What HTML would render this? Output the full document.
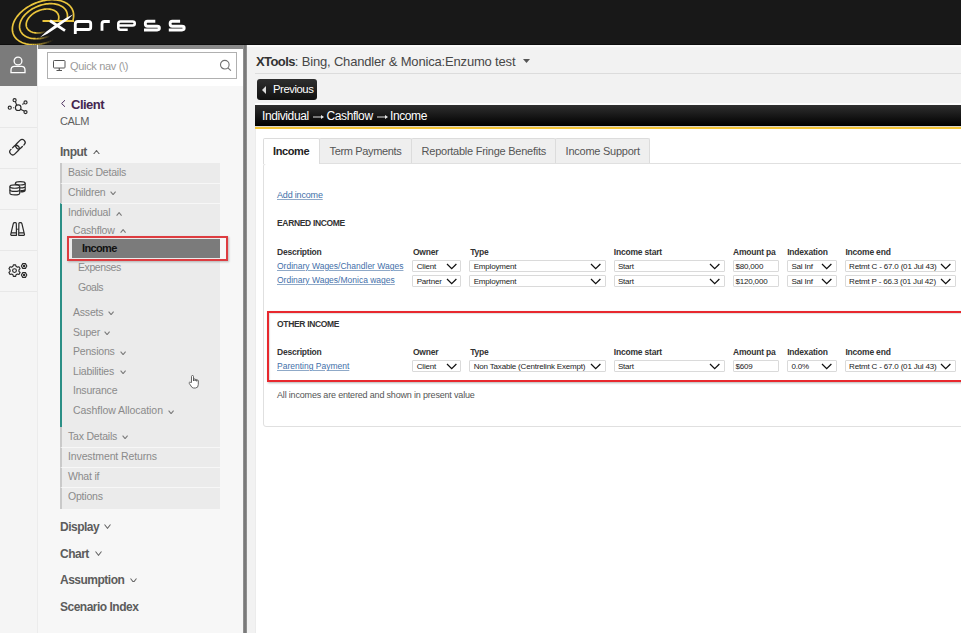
<!DOCTYPE html>
<html><head><meta charset="utf-8">
<style>
*{box-sizing:border-box}
html,body{margin:0;padding:0}
body{width:961px;height:633px;overflow:hidden;position:relative;background:#f2f2f2;font-family:"Liberation Sans",sans-serif;color:#444}
.abs{position:absolute}
.t{position:absolute;white-space:nowrap;line-height:1}
#hdr{left:0;top:0;width:961px;height:45px;background:#181818;border-bottom:1px solid #0e0e0e}
#icons{left:0;top:45px;width:38px;height:588px;background:#f5f5f5;border-right:1px solid #ececec}
.ic{position:absolute;left:0;width:37px;height:41px;border-bottom:1px solid #e6e6e6}
#side{left:38px;top:45px;width:205px;height:588px;background:#f7f7f7}
#sbar{left:243px;top:45px;width:4px;height:588px;background:linear-gradient(to right,#9a9a9a,#787878 40%,#787878 60%,#9a9a9a)}
#main{left:247px;top:45px;width:714px;height:588px;background:#f2f2f2}
.sub{position:absolute;left:60px;width:160px;background:#ebebeb;border-left:2.5px solid #c9c9c9}
.si{color:#8a8a8a;font-size:10.5px;letter-spacing:-0.2px}
.hd{color:#5c5c5c;font-size:12px;font-weight:bold;letter-spacing:-0.5px}
.chev{display:inline-block;vertical-align:middle}
.tab{position:absolute;top:138px;height:25px;border:1px solid #dcdcdc;border-bottom:none;background:#efefef;border-radius:2px 2px 0 0}
.lnk{color:#3f6fa9;text-decoration:underline;text-decoration-color:#8fa9c8}
.th{font-weight:bold;color:#333;letter-spacing:-0.2px}
.sel{position:absolute;height:12px;border:1px solid #d9d9d9;background:#fff;border-radius:1px}
.sel span{position:absolute;left:4px;top:2px;font-size:8px;line-height:8px;color:#222;white-space:nowrap}
.sel svg{position:absolute;top:3px}
</style></head><body>
<!-- header -->
<div id="hdr" class="abs">
<svg class="abs" style="left:0;top:0" width="200" height="45" viewBox="0 0 200 45">
 <g fill="none" stroke="#e9c43c" stroke-width="1.7"><path d="M72.66 20.97 L73.05 19.68 L73.35 18.40 L73.55 17.13 L73.64 15.88 L73.63 14.65 L73.52 13.44 L73.31 12.26 L73.00 11.12 L72.59 10.01 L72.08 8.94 L71.47 7.92 L70.77 6.95 L69.98 6.02 L69.10 5.15 L68.13 4.33 L67.07 3.58 L65.94 2.89 L64.73 2.26 L63.45 1.69 L62.11 1.20 L60.69 0.77 L59.22 0.42 L57.70 0.14 L56.13 -0.07 L54.51 -0.21 L52.85 -0.27 L51.17 -0.25 L49.45 -0.17 L47.72 -0.00 L45.96 0.23 L44.20 0.54 L42.44 0.92 L40.67 1.38 L38.92 1.90 L37.18 2.49 L35.45 3.14 L33.75 3.86 L32.09 4.63 L30.46 5.47 L28.87 6.36 L27.32 7.31 L25.83 8.30 L24.40 9.34 L23.03 10.42 L21.72 11.54 L20.49 12.70 L19.33 13.89 L18.25 15.11 L17.25 16.35 L16.33 17.61 L15.51 18.88 L14.77 20.16 L14.13 21.46 L13.59 22.75 L13.14 24.04 L12.79 25.33 L12.54 26.61 L12.40 27.87 L12.35 29.11 L12.41 30.33 L12.57 31.52 L12.83 32.69 L13.19 33.81 L13.64 34.90 L14.20 35.95 L14.85 36.95 L15.60 37.90 L16.43 38.80 L17.35 39.65 L18.36 40.43 L19.45 41.16 L20.62 41.82 L21.87 42.42 L23.18 42.95 L24.56 43.41 L26.00 43.80 L27.49 44.12 L29.04 44.37 L30.64 44.55 L32.27 44.65"/><path d="M32.27 44.65 L34.30 44.67" stroke-opacity="0.95"/><path d="M34.30 44.67 L36.37 44.58" stroke-opacity="0.85"/><path d="M36.37 44.58 L38.48 44.38" stroke-opacity="0.75"/><path d="M38.48 44.38 L40.60 44.07" stroke-opacity="0.65"/><path d="M40.60 44.07 L42.74 43.66" stroke-opacity="0.55"/><path d="M42.74 43.66 L44.88 43.15" stroke-opacity="0.45"/><path d="M44.88 43.15 L47.01 42.53" stroke-opacity="0.35"/><path d="M47.01 42.53 L49.12 41.81" stroke-opacity="0.25"/><path d="M49.12 41.81 L51.20 41.00" stroke-opacity="0.15"/><path d="M51.20 41.00 L53.24 40.09" stroke-opacity="0.05"/><path d="M66.40 20.97 L66.76 19.95 L67.05 18.93 L67.26 17.93 L67.39 16.93 L67.44 15.95 L67.41 14.98 L67.30 14.04 L67.10 13.12 L66.83 12.23 L66.48 11.37 L66.05 10.54 L65.54 9.75 L64.96 9.00 L64.31 8.29 L63.59 7.62 L62.80 7.00 L61.94 6.42 L61.02 5.90 L60.04 5.42 L59.01 5.00 L57.92 4.64 L56.79 4.33 L55.61 4.08 L54.39 3.89 L53.13 3.75 L51.84 3.67 L50.52 3.66 L49.18 3.70 L47.82 3.80 L46.44 3.96 L45.06 4.18 L43.67 4.46 L42.28 4.79 L40.89 5.18 L39.51 5.62 L38.15 6.11 L36.80 6.66 L35.47 7.25 L34.18 7.90 L32.91 8.58 L31.68 9.31 L30.49 10.08 L29.35 10.89 L28.25 11.73 L27.20 12.61 L26.21 13.51 L25.28 14.44 L24.40 15.39 L23.60 16.36 L22.86 17.35 L22.19 18.35 L21.59 19.36 L21.07 20.38 L20.62 21.40 L20.25 22.42 L19.96 23.43 L19.74 24.44 L19.61 25.44 L19.56 26.42 L19.59 27.38 L19.70 28.33 L19.89 29.25 L20.16 30.14 L20.51 31.00 L20.94 31.83 L21.44 32.62 L22.02 33.38 L22.67 34.09 L23.39 34.76 L24.18 35.38 L25.03 35.96 L25.95 36.49 L26.92 36.96 L27.95 37.38 L29.04 37.75 L30.17 38.06 L31.35 38.31 L32.57 38.51 L33.83 38.65 L35.11 38.72"/><path d="M35.11 38.72 L36.58 38.74" stroke-opacity="0.95"/><path d="M36.58 38.74 L38.07 38.69" stroke-opacity="0.85"/><path d="M38.07 38.69 L39.59 38.56" stroke-opacity="0.75"/><path d="M39.59 38.56 L41.12 38.36" stroke-opacity="0.65"/><path d="M41.12 38.36 L42.66 38.08" stroke-opacity="0.55"/><path d="M42.66 38.08 L44.21 37.74" stroke-opacity="0.45"/><path d="M44.21 37.74 L45.75 37.33" stroke-opacity="0.35"/><path d="M45.75 37.33 L47.29 36.85" stroke-opacity="0.25"/><path d="M47.29 36.85 L48.80 36.31" stroke-opacity="0.15"/><path d="M48.80 36.31 L50.30 35.70" stroke-opacity="0.05"/><path d="M58.07 20.96 L58.32 20.26 L58.52 19.57 L58.67 18.87 L58.76 18.19 L58.79 17.51 L58.77 16.85 L58.70 16.20 L58.57 15.57 L58.38 14.95 L58.14 14.36 L57.85 13.79 L57.51 13.24 L57.12 12.72 L56.67 12.22 L56.18 11.76 L55.65 11.33 L55.06 10.93 L54.44 10.56 L53.77 10.24 L53.07 9.94 L52.33 9.69 L51.56 9.47 L50.76 9.29 L49.92 9.15 L49.07 9.05 L48.19 8.99 L47.29 8.98 L46.38 9.00 L45.45 9.06 L44.51 9.17 L43.57 9.31 L42.62 9.50 L41.67 9.72 L40.73 9.98 L39.79 10.28 L38.86 10.61 L37.94 10.98 L37.04 11.39 L36.16 11.82 L35.29 12.29 L34.46 12.79 L33.65 13.31 L32.87 13.86 L32.12 14.44 L31.40 15.03 L30.73 15.65 L30.09 16.29 L29.50 16.94 L28.95 17.60 L28.45 18.28 L27.99 18.97 L27.59 19.66 L27.23 20.36 L26.92 21.06 L26.67 21.76 L26.48 22.45 L26.33 23.14 L26.24 23.83 L26.21 24.50 L26.23 25.17 L26.31 25.82 L26.44 26.45 L26.62 27.06 L26.86 27.66 L27.15 28.23 L27.50 28.78 L27.89 29.30 L28.34 29.79 L28.83 30.25 L29.37 30.68 L29.95 31.08 L30.58 31.44 L31.25 31.77 L31.95 32.07 L32.69 32.32 L33.46 32.54 L34.27 32.71 L35.10 32.85 L35.96 32.95 L36.83 33.01"/><path d="M36.83 33.01 L37.72 33.02" stroke-opacity="0.95"/><path d="M37.72 33.02 L38.63 33.00" stroke-opacity="0.85"/><path d="M38.63 33.00 L39.55 32.94" stroke-opacity="0.75"/><path d="M39.55 32.94 L40.47 32.83" stroke-opacity="0.65"/><path d="M40.47 32.83 L41.41 32.69" stroke-opacity="0.55"/><path d="M41.41 32.69 L42.34 32.51" stroke-opacity="0.45"/><path d="M42.34 32.51 L43.28 32.29" stroke-opacity="0.35"/><path d="M43.28 32.29 L44.22 32.04" stroke-opacity="0.25"/><path d="M44.22 32.04 L45.15 31.74" stroke-opacity="0.15"/><path d="M45.15 31.74 L46.07 31.42" stroke-opacity="0.05"/><path d="M42.5 21 L74 21" stroke-width="2"/></g>
 <path d="M40.2 37.3 L47.47 33.69 L57.65 27.12 L67.37 19.89 L73.3 14.3 L66.03 17.91 L55.85 24.48 L46.13 31.71 Z" fill="#fff"/>
 <g fill="none" stroke="#fff" stroke-width="2.85">
  <path d="M50 20.8 L65 30.6"/>
  <path d="M75.3 34 L75.3 24 Q75.3 21.5 78 21.5 L88.4 21.5 Q90.7 21.5 90.7 23.8 L90.7 27.2 Q90.7 29.5 88.4 29.5 L75.3 29.5"/>
  <path d="M102 30.8 L102 24 Q102 21.5 104.5 21.5 L109.8 21.5"/>
  <path stroke-width="2.55" d="M127.7 29.65 L120.5 29.65 Q118.3 29.65 118.3 27.4 L118.3 23.7 Q118.3 21.45 120.5 21.45 L132.6 21.45 Q134.75 21.45 134.75 23.5 Q134.75 25.55 132.6 25.55 L118.3 25.55"/>
  <path d="M155.3 21.2 L147.5 21.2 Q145.3 21.2 145.3 23.7 Q145.3 26.2 147.5 26.2 L157.2 26.2 Q159.4 26.2 159.4 28.1 Q159.4 30 157.2 30 L144 30"/>
  <path d="M180.1 21.2 L172.3 21.2 Q170.1 21.2 170.1 23.7 Q170.1 26.2 172.3 26.2 L182 26.2 Q184.2 26.2 184.2 28.1 Q184.2 30 182 30 L168.8 30"/>
 </g>
</svg>
</div>

<!-- icon column -->
<div id="icons" class="abs">
 <div class="abs" style="left:0;top:0;width:37px;height:41px;background:#7b7b7b"></div>
 <svg class="abs" style="left:8px;top:10px" width="20" height="20" viewBox="0 0 20 20" fill="none" stroke="#fff" stroke-width="1.3">
  <circle cx="10" cy="6" r="3.9"/>
  <path d="M3 17.6 L3 15 Q3 11.4 6.6 11.4 L13.4 11.4 Q17 11.4 17 15 L17 17.6 Z"/>
 </svg>
 <svg class="abs" style="left:7px;top:52px" width="22" height="20" viewBox="0 0 22 20" fill="none" stroke="#2a2a2a" stroke-width="1.15">
  <circle cx="11.2" cy="10.7" r="2.8"/><circle cx="7.6" cy="3.2" r="1.55"/><circle cx="18.5" cy="5.4" r="1.55"/><circle cx="2.75" cy="10.7" r="1.55"/><circle cx="18.5" cy="15.1" r="1.55"/>
  <path d="M8.4 4.6 L9.7 8.2 M16.6 6.6 L15.4 7.4 M6.2 10.7 L7.2 10.7 M17.1 14.1 L13.5 12.2"/>
 </svg>
 <div class="abs" style="left:0;top:82px;width:37px;height:1px;background:#e8e8e8"></div>
 <svg class="abs" style="left:8px;top:92px" width="20" height="20" viewBox="0 0 20 20" fill="none" stroke="#2a2a2a" stroke-width="1.25" stroke-linecap="round">
  <g transform="translate(12.4 7.2) rotate(-45)"><path d="M-0.2 3.0 L-2.4 3.0 A3.0 3.0 0 0 1 -2.4 -3.0 L2.4 -3.0 A3.0 3.0 0 0 1 2.4 3.0 L1.9 3.0"/></g>
  <g transform="translate(6.5 13.1) rotate(-45)"><path d="M0.2 -3.0 L2.4 -3.0 A3.0 3.0 0 0 1 2.4 3.0 L-2.4 3.0 A3.0 3.0 0 0 1 -2.4 -3.0 L-1.9 -3.0"/></g>
 </svg>
 <div class="abs" style="left:0;top:123px;width:37px;height:1px;background:#e8e8e8"></div>
 <svg class="abs" style="left:8px;top:135px" width="20" height="17" viewBox="0 0 20 17" fill="none" stroke="#2a2a2a" stroke-width="1.15">
  <ellipse cx="12.3" cy="3.3" rx="4.9" ry="1.7"/>
  <path d="M7.4 3.3 L7.4 10.2 M17.2 3.3 L17.2 10.2 Q17.2 11.9 12.3 11.9 M7.4 6.2 Q7.4 7.9 12.3 7.9 Q17.2 7.9 17.2 6.2 M12.3 10.6 Q17.2 10.6 17.2 8.9"/>
  <path d="M1.9 6.5 Q1.9 4.8 6.8 4.8 Q11.7 4.8 11.7 6.5 L11.7 13.2 Q11.7 14.9 6.8 14.9 Q1.9 14.9 1.9 13.2 Z" fill="#f5f5f5"/>
  <path d="M1.9 6.5 Q1.9 8.2 6.8 8.2 Q11.7 8.2 11.7 6.5 M1.9 9.7 Q1.9 11.4 6.8 11.4 Q11.7 11.4 11.7 9.7"/>
 </svg>
 <div class="abs" style="left:0;top:164px;width:37px;height:1px;background:#e8e8e8"></div>
 <svg class="abs" style="left:9px;top:176px" width="19" height="16" viewBox="0 0 19 16" fill="none" stroke="#2a2a2a" stroke-width="1.2" stroke-linejoin="round">
  <path d="M2.3 14.3 L1.7 13.6 L4.3 2.6 Q4.6 1.6 5.6 1.6 L6.5 1.6 Q7.3 1.6 7.3 2.6 L7.5 14.3 Z M1.9 11.8 L7.5 11.8"/>
  <path d="M9.7 14.3 L9.9 2.6 Q9.9 1.6 10.7 1.6 L11.6 1.6 Q12.6 1.6 12.9 2.6 L15.5 13.6 L14.9 14.3 Z M9.7 11.8 L15.3 11.8"/>
  <path d="M7.4 8.2 L9.8 8.2" stroke-width="0.9"/>
 </svg>
 <div class="abs" style="left:0;top:205px;width:37px;height:1px;background:#e8e8e8"></div>
 <svg class="abs" style="left:7px;top:217px" width="22" height="18" viewBox="0 0 22 18" fill="none" stroke="#2a2a2a" stroke-width="1.15" stroke-linejoin="round">
  <path d="M5.96 4.37 L6.37 2.81 L8.63 2.81 L9.04 4.37 L10.39 5.15 L11.95 4.73 L13.08 6.68 L11.93 7.82 L11.93 9.38 L13.08 10.52 L11.95 12.47 L10.39 12.05 L9.04 12.83 L8.63 14.39 L6.37 14.39 L5.96 12.83 L4.61 12.05 L3.05 12.47 L1.92 10.52 L3.07 9.38 L3.07 7.82 L1.92 6.68 L3.05 4.73 L4.61 5.15 Z"/>
  <circle cx="7.5" cy="8.6" r="1.9"/>
  <path d="M19.80 4.00 L18.45 6.34 L15.75 6.34 L14.40 4.00 L15.75 1.66 L18.45 1.66 Z"/><circle cx="17.1" cy="4" r="0.6" fill="#2a2a2a"/>
  <path d="M19.80 13.00 L18.45 15.34 L15.75 15.34 L14.40 13.00 L15.75 10.66 L18.45 10.66 Z"/><circle cx="17.1" cy="13" r="0.6" fill="#2a2a2a"/>
 </svg>
 <div class="abs" style="left:0;top:246px;width:37px;height:1px;background:#e8e8e8"></div>
</div>

<!-- sidebar -->
<div id="side" class="abs">
 <div class="abs" style="left:0;top:0;width:205px;height:4px;background:#8a8a8a"></div>
 <div class="abs" style="left:0;top:4px;width:205px;height:37px;background:#fff"></div>
 <div class="abs" style="left:9px;top:7px;width:190px;height:27px;border:1px solid #b0b0b0;background:#fff"></div>
 <svg class="abs" style="left:15px;top:15px" width="13" height="12" viewBox="0 0 13 12" fill="none" stroke="#555" stroke-width="1"><rect x="0.5" y="0.5" width="11.5" height="7.5" rx="0.8"/><path d="M6.25 8 L6.25 10 M3.5 10.5 L9 10.5" stroke-width="1.2"/></svg>
 <div class="t" style="left:32px;top:16px;font-size:11px;color:#9a9a9a;letter-spacing:-0.32px">Quick nav (\)</div>
 <svg class="abs" style="left:180px;top:13px" width="15" height="15" viewBox="0 0 15 15" fill="none" stroke="#707070" stroke-width="1.1"><circle cx="6.8" cy="6.7" r="4.3"/><path d="M9.9 9.8 L12.9 12.6"/></svg>
</div>

<div class="abs" style="left:38px;top:86px;width:205px;height:547px">
</div>


<!-- sidebar nav -->
<svg class="abs" style="left:60px;top:99px" width="7" height="9" viewBox="0 0 7 9" fill="none" stroke="#4b2d5e" stroke-width="1"><path d="M5 1.2 L1.6 4.5 L5 7.8"/></svg>
<div class="t" style="left:71px;top:98px;font-size:13px;font-weight:bold;color:#44264f;letter-spacing:-0.5px">Client</div>
<div class="t" style="left:60px;top:116px;font-size:11px;color:#5f5f5f;letter-spacing:-0.35px">CALM</div>
<div class="t hd" style="left:60px;top:146px">Input</div>
<svg class="abs" style="left:92.5px;top:149.5px" width="7.0" height="4.8" viewBox="-0.5 -0.5 7.0 4.8" fill="none" stroke="#666" stroke-width="1.05"><path d="M0 3.80 L3.00 0 L6.00 3.80"/></svg>
<div class="sub" style="top:163px;height:20px"></div>
<div class="sub" style="top:183px;height:20px;border-top:1px solid #f7f7f7"></div>
<div class="sub" style="top:203px;height:224px;border-left-color:#2b8f86;border-top:1px solid #f7f7f7"></div>
<div class="sub" style="top:427px;height:20px"></div>
<div class="sub" style="top:447px;height:20px;border-top:1px solid #f7f7f7"></div>
<div class="sub" style="top:467px;height:20px;border-top:1px solid #f7f7f7"></div>
<div class="sub" style="top:487px;height:22px;border-top:1px solid #f7f7f7"></div>
<div class="t si" style="left:68px;top:167.3px">Basic Details</div>
<div class="t si" style="left:68px;top:187.3px">Children</div>
<svg class="abs" style="left:110.1px;top:190.7px" width="6.2" height="4.3" viewBox="-0.6 -0.6 6.2 4.3" fill="none" stroke="#7a7a7a" stroke-width="1.05"><path d="M0 0 L2.5 3.1 L5.0 0"/></svg>
<div class="t si" style="left:68px;top:207.3px">Individual</div>
<svg class="abs" style="left:115.8px;top:211.8px" width="6.2" height="4.3" viewBox="-0.6 -0.6 6.2 4.3" fill="none" stroke="#7a7a7a" stroke-width="1.05"><path d="M0 3.1 L2.5 0 L5.0 3.1"/></svg>
<div class="t si" style="left:73px;top:225.3px">Cashflow</div>
<svg class="abs" style="left:120.0px;top:228.8px" width="6.2" height="4.3" viewBox="-0.6 -0.6 6.2 4.3" fill="none" stroke="#7a7a7a" stroke-width="1.05"><path d="M0 3.1 L2.5 0 L5.0 3.1"/></svg>
<div class="t si" style="left:78px;top:262.3px;letter-spacing:-0.42px">Expenses</div>
<div class="t si" style="left:78px;top:282.3px;letter-spacing:-0.48px">Goals</div>
<div class="t si" style="left:73px;top:307.3px">Assets</div>
<svg class="abs" style="left:108.4px;top:311.0px" width="6.2" height="4.3" viewBox="-0.6 -0.6 6.2 4.3" fill="none" stroke="#7a7a7a" stroke-width="1.05"><path d="M0 0 L2.5 3.1 L5.0 0"/></svg>
<div class="t si" style="left:73px;top:327.3px">Super</div>
<svg class="abs" style="left:103.6px;top:331.0px" width="6.2" height="4.3" viewBox="-0.6 -0.6 6.2 4.3" fill="none" stroke="#7a7a7a" stroke-width="1.05"><path d="M0 0 L2.5 3.1 L5.0 0"/></svg>
<div class="t si" style="left:73px;top:346.3px">Pensions</div>
<svg class="abs" style="left:119.7px;top:350.5px" width="6.2" height="4.3" viewBox="-0.6 -0.6 6.2 4.3" fill="none" stroke="#7a7a7a" stroke-width="1.05"><path d="M0 0 L2.5 3.1 L5.0 0"/></svg>
<div class="t si" style="left:73px;top:366.3px">Liabilities</div>
<svg class="abs" style="left:120.2px;top:370.0px" width="6.2" height="4.3" viewBox="-0.6 -0.6 6.2 4.3" fill="none" stroke="#7a7a7a" stroke-width="1.05"><path d="M0 0 L2.5 3.1 L5.0 0"/></svg>
<div class="t si" style="left:73px;top:385.3px">Insurance</div>
<div class="t si" style="left:73px;top:405.3px;letter-spacing:-0.06px">Cashflow Allocation</div>
<svg class="abs" style="left:168.1px;top:409.8px" width="6.2" height="4.3" viewBox="-0.6 -0.6 6.2 4.3" fill="none" stroke="#7a7a7a" stroke-width="1.05"><path d="M0 0 L2.5 3.1 L5.0 0"/></svg>
<div class="t si" style="left:68px;top:431.3px">Tax Details</div>
<svg class="abs" style="left:122.4px;top:435.0px" width="6.2" height="4.3" viewBox="-0.6 -0.6 6.2 4.3" fill="none" stroke="#7a7a7a" stroke-width="1.05"><path d="M0 0 L2.5 3.1 L5.0 0"/></svg>
<div class="t si" style="left:68px;top:451.3px;letter-spacing:-0.12px">Investment Returns</div>
<div class="t si" style="left:68px;top:471.3px">What if</div>
<div class="t si" style="left:68px;top:491.3px">Options</div>
<div class="abs" style="left:67px;top:236px;width:161px;height:25px;border:2px solid #dd3c40;box-shadow:1px 1px 2px rgba(0,0,0,0.25)"></div>
<div class="abs" style="left:72px;top:239px;width:148px;height:19px;background:#7b7b7b"></div>
<div class="t" style="left:82px;top:243px;font-size:11px;font-weight:bold;color:#111;letter-spacing:-0.65px">Income</div>
<div class="t hd" style="left:60px;top:521px">Display</div>
<svg class="abs" style="left:103.9px;top:524.0px" width="7.0" height="4.8" viewBox="-0.5 -0.5 7.0 4.8" fill="none" stroke="#666" stroke-width="1.05"><path d="M0 0 L3.00 3.80 L6.00 0"/></svg>
<div class="t hd" style="left:60px;top:548px">Chart</div>
<svg class="abs" style="left:94.5px;top:551.0px" width="7.0" height="4.8" viewBox="-0.5 -0.5 7.0 4.8" fill="none" stroke="#666" stroke-width="1.05"><path d="M0 0 L3.00 3.80 L6.00 0"/></svg>
<div class="t hd" style="left:60px;top:574px">Assumption</div>
<svg class="abs" style="left:129.7px;top:577.5px" width="7.0" height="4.8" viewBox="-0.5 -0.5 7.0 4.8" fill="none" stroke="#666" stroke-width="1.05"><path d="M0 0 L3.00 3.80 L6.00 0"/></svg>
<div class="t hd" style="left:60px;top:601px">Scenario Index</div>
<div id="sbar" class="abs"></div>
<div id="main" class="abs"></div>


<!-- main -->
<div class="abs" style="left:247px;top:45px;width:714px;height:2px;background:#fafafa"></div>
<div class="t" style="left:256px;top:55px;font-size:13px;color:#474747;letter-spacing:-0.17px"><b style="color:#333;letter-spacing:-0.6px">XTools</b>: Bing, Chandler &amp; Monica:Enzumo test</div>
<svg class="abs" style="left:523px;top:59px" width="7" height="4" viewBox="0 0 7 4"><path d="M0 0 L7 0 L3.5 4 Z" fill="#555"/></svg>
<div class="abs" style="left:255px;top:73px;width:706px;height:1px;background:#dcdcdc"></div>
<div class="abs" style="left:257px;top:79px;width:60px;height:21px;border-radius:3px;background:linear-gradient(#2e2e2e,#111);"></div>
<svg class="abs" style="left:262px;top:85.8px" width="4" height="8" viewBox="0 0 4 8"><path d="M4 0 L0 4 L4 8 Z" fill="#ddd"/></svg>
<div class="t" style="left:273px;top:83.5px;font-size:11.3px;color:#fff;letter-spacing:-0.45px">Previous</div>
<div class="abs" style="left:255px;top:105px;width:706px;height:21px;background:linear-gradient(#2f2f2f,#000)"></div>
<div class="abs" style="left:255px;top:126px;width:706px;height:1px;background:#d9d6cc"></div><div class="abs" style="left:255px;top:127px;width:706px;height:2px;background:#f4c536"></div><div class="abs" style="left:255px;top:103px;width:706px;height:2px;background:#fdfdfd"></div>
<div class="t" style="left:262px;top:110px;font-size:12px;color:#fff;letter-spacing:-0.4px">Individual</div><svg class="abs" style="left:312.5px;top:114px" width="12" height="6" viewBox="0 0 12 6"><path d="M0 2.4 L8.3 2.4 L8.3 3.6 L0 3.6 Z" fill="#bdbdbd"/><path d="M8 1 L11 3 L8 5 Z" fill="#e8e8e8"/></svg><div class="t" style="left:326.5px;top:110px;font-size:12px;color:#fff;letter-spacing:-0.4px">Cashflow</div><svg class="abs" style="left:376.5px;top:114px" width="12" height="6" viewBox="0 0 12 6"><path d="M0 2.4 L8.3 2.4 L8.3 3.6 L0 3.6 Z" fill="#bdbdbd"/><path d="M8 1 L11 3 L8 5 Z" fill="#e8e8e8"/></svg><div class="t" style="left:390px;top:110px;font-size:12px;color:#fff;letter-spacing:-0.4px">Income</div>
<div class="abs" style="left:255px;top:129px;width:706px;height:504px;background:#fff;border-left:1px solid #ececec"></div>

<!-- panel -->
<div class="abs" style="left:263px;top:163px;width:720px;height:264px;border:1px solid #e0e0e0;border-radius:3px"></div>
<div class="tab" style="left:319px;width:93px"></div>
<div class="tab" style="left:411px;width:145px"></div>
<div class="tab" style="left:555px;width:95px"></div>
<div class="tab" style="left:263px;width:57px;background:#fff;height:26px"></div>
<div class="t" style="left:273px;top:146.0px;font-size:11px;font-weight:bold;color:#222;letter-spacing:-0.4px">Income</div>
<div class="t" style="left:329.5px;top:146.0px;font-size:11px;color:#555;letter-spacing:-0.35px">Term Payments</div>
<div class="t" style="left:421.6px;top:146.0px;font-size:11px;color:#555;letter-spacing:-0.25px">Reportable Fringe Benefits</div>
<div class="t" style="left:565.6px;top:146.0px;font-size:11px;color:#555;letter-spacing:-0.25px">Income Support</div>
<div class="t lnk" style="left:277px;top:190.58px;font-size:9px;letter-spacing:-0.18px">Add income</div>
<div class="t" style="left:277px;top:219.40px;font-size:8.5px;font-weight:bold;color:#333;letter-spacing:-0.33px">EARNED INCOME</div>
<div class="t th" style="left:277px;top:247.70px;font-size:8.5px;">Description</div>
<div class="t th" style="left:412.9px;top:247.70px;font-size:8.5px;">Owner</div>
<div class="t th" style="left:470.2px;top:247.70px;font-size:8.5px;">Type</div>
<div class="t th" style="left:613.8px;top:247.70px;font-size:8.5px;">Income start</div>
<div class="t th" style="left:733px;top:247.70px;font-size:8.5px;">Amount pa</div>
<div class="t th" style="left:787.2px;top:247.70px;font-size:8.5px;">Indexation</div>
<div class="t th" style="left:845.4px;top:247.70px;font-size:8.5px;">Income end</div>
<div class="t lnk" style="left:277px;top:261.90px;font-size:8.5px;">Ordinary Wages/Chandler Wages</div>
<div class="t lnk" style="left:277px;top:276.10px;font-size:8.5px;">Ordinary Wages/Monica wages</div>
<div class="abs" style="left:412.2px;top:260.3px;width:49.2px;height:12px;border:1px solid #dadada;border-radius:1px;background:#fff"></div>
<div class="t" style="left:416.7px;top:262.75px;font-size:8px;color:#222;letter-spacing:-0.18px">Client</div>
<svg class="abs" style="left:445.9px;top:263.1px" width="11.4" height="6.7" viewBox="-1 -1 11.4 6.7" fill="none" stroke="#111" stroke-width="1.25"><path d="M0 0 L4.70 4.70 L9.40 0"/></svg>
<div class="abs" style="left:469.3px;top:260.3px;width:136.4px;height:12px;border:1px solid #dadada;border-radius:1px;background:#fff"></div>
<div class="t" style="left:473.7px;top:262.75px;font-size:8px;color:#222;letter-spacing:-0.18px">Employment</div>
<svg class="abs" style="left:590.2px;top:263.1px" width="11.4" height="6.7" viewBox="-1 -1 11.4 6.7" fill="none" stroke="#111" stroke-width="1.25"><path d="M0 0 L4.70 4.70 L9.40 0"/></svg>
<div class="abs" style="left:613.8px;top:260.3px;width:110.8px;height:12px;border:1px solid #dadada;border-radius:1px;background:#fff"></div>
<div class="t" style="left:617.9px;top:262.75px;font-size:8px;color:#222;letter-spacing:-0.18px">Start</div>
<svg class="abs" style="left:709.1px;top:263.1px" width="11.4" height="6.7" viewBox="-1 -1 11.4 6.7" fill="none" stroke="#111" stroke-width="1.25"><path d="M0 0 L4.70 4.70 L9.40 0"/></svg>
<div class="abs" style="left:733px;top:260.3px;width:46px;height:12px;border:1px solid #dadada;border-radius:1px;background:#fff"></div>
<div class="t" style="left:735.5px;top:262.75px;font-size:8px;color:#222;letter-spacing:-0.18px">$80,000</div>
<div class="abs" style="left:787px;top:260.3px;width:49.6px;height:12px;border:1px solid #dadada;border-radius:1px;background:#fff"></div>
<div class="t" style="left:791.4px;top:262.75px;font-size:8px;color:#222;letter-spacing:-0.18px">Sal Inf</div>
<svg class="abs" style="left:821.1px;top:263.1px" width="11.4" height="6.7" viewBox="-1 -1 11.4 6.7" fill="none" stroke="#111" stroke-width="1.25"><path d="M0 0 L4.70 4.70 L9.40 0"/></svg>
<div class="abs" style="left:844.9px;top:260.3px;width:110.8px;height:12px;border:1px solid #dadada;border-radius:1px;background:#fff"></div>
<div class="t" style="left:849.1px;top:262.75px;font-size:8px;color:#222;letter-spacing:-0.18px">Retmt C - 67.0 (01 Jul 43)</div>
<svg class="abs" style="left:940.2px;top:263.1px" width="11.4" height="6.7" viewBox="-1 -1 11.4 6.7" fill="none" stroke="#111" stroke-width="1.25"><path d="M0 0 L4.70 4.70 L9.40 0"/></svg>
<div class="abs" style="left:412.2px;top:275.2px;width:49.2px;height:12px;border:1px solid #dadada;border-radius:1px;background:#fff"></div>
<div class="t" style="left:416.7px;top:277.65px;font-size:8px;color:#222;letter-spacing:-0.18px">Partner</div>
<svg class="abs" style="left:445.9px;top:278.0px" width="11.4" height="6.7" viewBox="-1 -1 11.4 6.7" fill="none" stroke="#111" stroke-width="1.25"><path d="M0 0 L4.70 4.70 L9.40 0"/></svg>
<div class="abs" style="left:469.3px;top:275.2px;width:136.4px;height:12px;border:1px solid #dadada;border-radius:1px;background:#fff"></div>
<div class="t" style="left:473.7px;top:277.65px;font-size:8px;color:#222;letter-spacing:-0.18px">Employment</div>
<svg class="abs" style="left:590.2px;top:278.0px" width="11.4" height="6.7" viewBox="-1 -1 11.4 6.7" fill="none" stroke="#111" stroke-width="1.25"><path d="M0 0 L4.70 4.70 L9.40 0"/></svg>
<div class="abs" style="left:613.8px;top:275.2px;width:110.8px;height:12px;border:1px solid #dadada;border-radius:1px;background:#fff"></div>
<div class="t" style="left:617.9px;top:277.65px;font-size:8px;color:#222;letter-spacing:-0.18px">Start</div>
<svg class="abs" style="left:709.1px;top:278.0px" width="11.4" height="6.7" viewBox="-1 -1 11.4 6.7" fill="none" stroke="#111" stroke-width="1.25"><path d="M0 0 L4.70 4.70 L9.40 0"/></svg>
<div class="abs" style="left:733px;top:275.2px;width:46px;height:12px;border:1px solid #dadada;border-radius:1px;background:#fff"></div>
<div class="t" style="left:735.5px;top:277.65px;font-size:8px;color:#222;letter-spacing:-0.18px">$120,000</div>
<div class="abs" style="left:787px;top:275.2px;width:49.6px;height:12px;border:1px solid #dadada;border-radius:1px;background:#fff"></div>
<div class="t" style="left:791.4px;top:277.65px;font-size:8px;color:#222;letter-spacing:-0.18px">Sal Inf</div>
<svg class="abs" style="left:821.1px;top:278.0px" width="11.4" height="6.7" viewBox="-1 -1 11.4 6.7" fill="none" stroke="#111" stroke-width="1.25"><path d="M0 0 L4.70 4.70 L9.40 0"/></svg>
<div class="abs" style="left:844.9px;top:275.2px;width:110.8px;height:12px;border:1px solid #dadada;border-radius:1px;background:#fff"></div>
<div class="t" style="left:849.1px;top:277.65px;font-size:8px;color:#222;letter-spacing:-0.18px">Retmt P - 66.3 (01 Jul 42)</div>
<svg class="abs" style="left:940.2px;top:278.0px" width="11.4" height="6.7" viewBox="-1 -1 11.4 6.7" fill="none" stroke="#111" stroke-width="1.25"><path d="M0 0 L4.70 4.70 L9.40 0"/></svg>
<div class="abs" style="left:267px;top:311px;width:720px;height:71px;border:2px solid #e8282e;box-shadow:1px 1px 2px rgba(0,0,0,0.3), inset 1px 1px 1px rgba(0,0,0,0.12)"></div>
<div class="t" style="left:277px;top:320.30px;font-size:8.5px;font-weight:bold;color:#333;letter-spacing:-0.33px">OTHER INCOME</div>
<div class="t th" style="left:277px;top:348.40px;font-size:8.5px;">Description</div>
<div class="t th" style="left:412.9px;top:348.40px;font-size:8.5px;">Owner</div>
<div class="t th" style="left:470.2px;top:348.40px;font-size:8.5px;">Type</div>
<div class="t th" style="left:613.8px;top:348.40px;font-size:8.5px;">Income start</div>
<div class="t th" style="left:733px;top:348.40px;font-size:8.5px;">Amount pa</div>
<div class="t th" style="left:787.2px;top:348.40px;font-size:8.5px;">Indexation</div>
<div class="t th" style="left:845.4px;top:348.40px;font-size:8.5px;">Income end</div>
<div class="t lnk" style="left:277px;top:362.20px;font-size:8.5px;">Parenting Payment</div>
<div class="abs" style="left:412.2px;top:360.3px;width:49.2px;height:12px;border:1px solid #dadada;border-radius:1px;background:#fff"></div>
<div class="t" style="left:416.7px;top:362.75px;font-size:8px;color:#222;letter-spacing:-0.18px">Client</div>
<svg class="abs" style="left:445.9px;top:363.1px" width="11.4" height="6.7" viewBox="-1 -1 11.4 6.7" fill="none" stroke="#111" stroke-width="1.25"><path d="M0 0 L4.70 4.70 L9.40 0"/></svg>
<div class="abs" style="left:469.3px;top:360.3px;width:136.4px;height:12px;border:1px solid #dadada;border-radius:1px;background:#fff"></div>
<div class="t" style="left:473.7px;top:362.75px;font-size:8px;color:#222;letter-spacing:-0.18px">Non Taxable (Centrelink Exempt)</div>
<svg class="abs" style="left:590.2px;top:363.1px" width="11.4" height="6.7" viewBox="-1 -1 11.4 6.7" fill="none" stroke="#111" stroke-width="1.25"><path d="M0 0 L4.70 4.70 L9.40 0"/></svg>
<div class="abs" style="left:613.8px;top:360.3px;width:110.8px;height:12px;border:1px solid #dadada;border-radius:1px;background:#fff"></div>
<div class="t" style="left:617.9px;top:362.75px;font-size:8px;color:#222;letter-spacing:-0.18px">Start</div>
<svg class="abs" style="left:709.1px;top:363.1px" width="11.4" height="6.7" viewBox="-1 -1 11.4 6.7" fill="none" stroke="#111" stroke-width="1.25"><path d="M0 0 L4.70 4.70 L9.40 0"/></svg>
<div class="abs" style="left:733px;top:360.3px;width:46px;height:12px;border:1px solid #dadada;border-radius:1px;background:#fff"></div>
<div class="t" style="left:735.5px;top:362.75px;font-size:8px;color:#222;letter-spacing:-0.18px">$609</div>
<div class="abs" style="left:787px;top:360.3px;width:49.6px;height:12px;border:1px solid #dadada;border-radius:1px;background:#fff"></div>
<div class="t" style="left:791.4px;top:362.75px;font-size:8px;color:#222;letter-spacing:-0.18px">0.0%</div>
<svg class="abs" style="left:821.1px;top:363.1px" width="11.4" height="6.7" viewBox="-1 -1 11.4 6.7" fill="none" stroke="#111" stroke-width="1.25"><path d="M0 0 L4.70 4.70 L9.40 0"/></svg>
<div class="abs" style="left:844.9px;top:360.3px;width:110.8px;height:12px;border:1px solid #dadada;border-radius:1px;background:#fff"></div>
<div class="t" style="left:849.1px;top:362.75px;font-size:8px;color:#222;letter-spacing:-0.18px">Retmt C - 67.0 (01 Jul 43)</div>
<svg class="abs" style="left:940.2px;top:363.1px" width="11.4" height="6.7" viewBox="-1 -1 11.4 6.7" fill="none" stroke="#111" stroke-width="1.25"><path d="M0 0 L4.70 4.70 L9.40 0"/></svg>
<div class="t" style="left:277px;top:390.78px;font-size:9px;color:#555;letter-spacing:-0.18px">All incomes are entered and shown in present value</div>
<!-- cursor -->
<svg class="abs" style="left:188px;top:375px" width="12" height="14" viewBox="0 0 12 14" fill="#fff" stroke="#555" stroke-width="0.9"><path d="M3.5 7.5 L3.5 1.5 Q3.5 0.5 4.5 0.5 Q5.5 0.5 5.5 1.5 L5.5 6 L5.5 4.5 Q5.5 3.8 6.3 3.8 Q7.1 3.8 7.1 4.5 L7.1 6 L7.1 5 Q7.1 4.3 7.9 4.3 Q8.7 4.3 8.7 5 L8.7 6.3 L8.7 5.7 Q8.7 5 9.5 5 Q10.3 5 10.3 5.7 L10.3 9.5 Q10.3 13 7.5 13 L5.5 13 Q4 13 3 11 L1.2 8.3 Q0.8 7.5 1.6 7.2 Q2.3 7 3 7.8 Z"/></svg>

</body></html>
